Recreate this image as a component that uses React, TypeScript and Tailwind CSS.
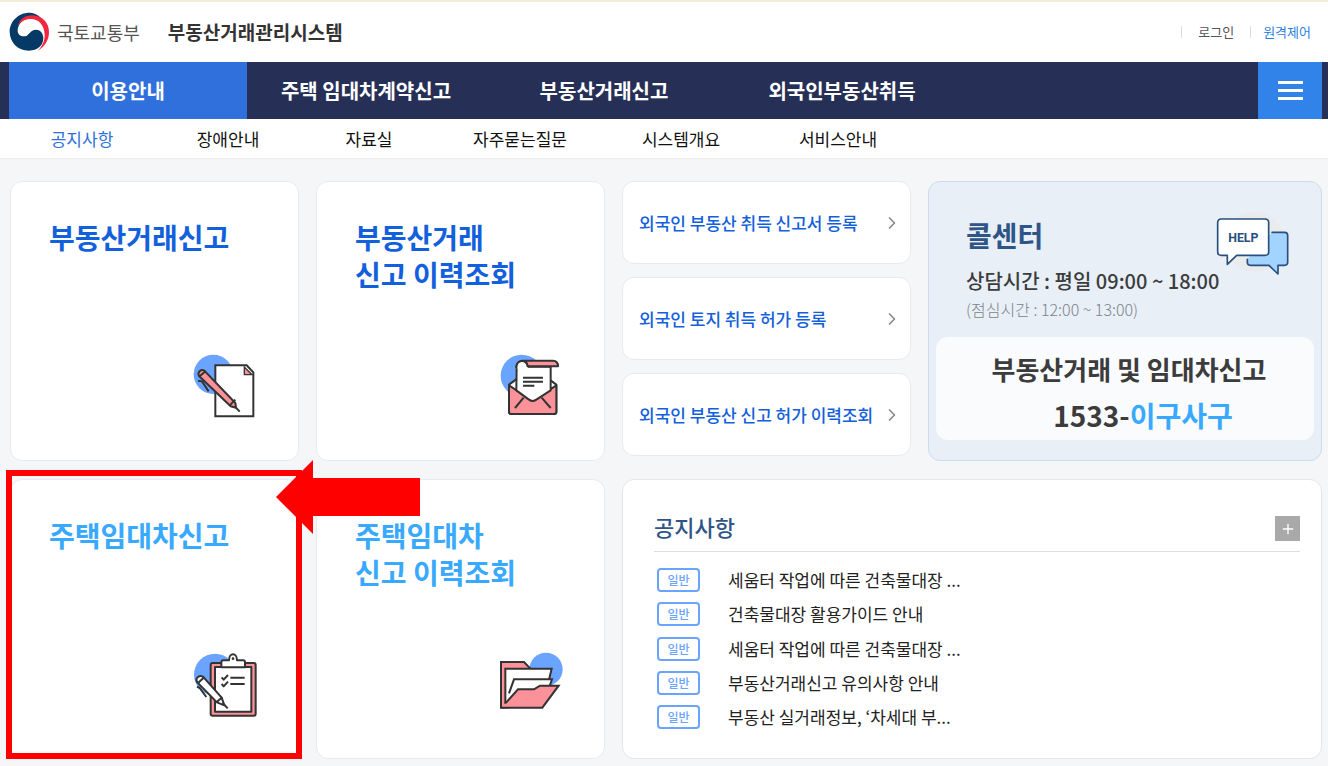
import { ReactNode } from 'react';
import { ChevronRight, Plus } from 'lucide-react';

const MENUS = ['이용안내', '주택 임대차계약신고', '부동산거래신고', '외국인부동산취득'];

const SUB_MENUS = ['공지사항', '장애안내', '자료실', '자주묻는질문', '시스템개요', '서비스안내'];

const NOTICES = [
  '세움터 작업에 따른 건축물대장 ...',
  '건축물대장 활용가이드 안내',
  '세움터 작업에 따른 건축물대장 ...',
  '부동산거래신고 유의사항 안내',
  '부동산 실거래정보, ‘차세대 부...',
];

function Logo() {
  return (
    <svg viewBox="14 12 120 120" className="w-10 h-10" aria-hidden="true">
      <path d="M76 14C42 14 16 40 16 71s24 57 58 57c26 0 43-16 43-37 0-17-10-26-22-26-18 0-20 20-37 20-11 0-18-8-18-17 0-20 18-38 42-38 16 0 32 8 42 20C114 30 97 14 76 14z" fill="#063a66" />
      <path d="M40 54C46 34 62 22 84 22c30 1 50 23 50 50 0 24-12 44-34 56 14-13 21-29 21-46 0-29-17-49-41-49-17 0-32 8-40 21z" fill="#f5273f" />
    </svg>
  );
}

function ReportIcon() {
  return (
    <svg viewBox="36 39 198 198" className="w-[66px] h-[66px]" fill="none" stroke="#333" strokeWidth="6" aria-hidden="true">
      <circle cx="100" cy="103" r="59" fill="#6ba4ff" stroke="none" />
      <path d="M106 76h94l20 21v132H106z" fill="#fff" />
      <path d="M193 81v23h23z" fill="#fb9199" strokeWidth="4" />
      <path d="M57 108c-6-11 6-22 16-16l93 97 2 14-16-4z" fill="#fb9199" strokeLinejoin="round" />
      <path d="M149 196l17-17M60 108l17-15M165 200l14 15" />
      <path d="M54 122l12 2 20 30" />
    </svg>
  );
}

function MailIcon() {
  return (
    <svg viewBox="24 39 198 198" className="w-[66px] h-[66px]" fill="none" stroke="#333" strokeWidth="6" strokeLinejoin="round" aria-hidden="true">
      <circle cx="95" cy="107" r="63" fill="#6ba4ff" stroke="none" />
      <path d="M57 134l71-52 71 52v82q0 6-7 6H64q-7 0-7-6z" fill="#fff" />
      <path d="M57 136l71 47 71-47v80q0 6-7 6H64q-7 0-7-6z" fill="#fb9199" />
      <path d="M80 80l-1 71 38 28q11 8 22 0l43-28V80z" fill="#fff" />
      <path d="M79 82c0-25 34-27 34-3h91c0-12-6-17-15-17H94" fill="#fb9199" />
      <path d="M79 84c0-27 33-27 34-5v6H82z" fill="#fff" stroke="none" />
      <path d="M79 84c0-27 33-27 34-3M99 113h60M99 125h60M99 137h34M101 173l-26 31M155 173l27 31" />
    </svg>
  );
}

function ChecklistIcon() {
  return (
    <svg viewBox="36 33 198 198" className="w-[66px] h-[66px]" fill="none" stroke="#333" strokeWidth="6" strokeLinejoin="round" aria-hidden="true">
      <circle cx="105" cy="104" r="63" fill="#6ba4ff" stroke="none" />
      <rect x="92" y="69" width="135" height="158" rx="6" fill="#fb9199" />
      <path d="M105 81h109v134H105z" fill="#fff" />
      <path d="M124 82V67q0-6 6-6h17c0-24 24-24 24 0h18q6 0 6 6v15z" fill="#fff" />
      <circle cx="159" cy="56" r="4" fill="#333" stroke="none" />
      <path d="M125 112l6 7 13-14M125 132l6 7 13-14M151 113h43M151 132h43" />
      <path d="M52 127c-9-12 8-25 19-15l54 61 8 23-22-9z" fill="#fff" />
      <path d="M55 128l16-15M109 187l18-15M128 189l15 16M51 140l8 4 20 27" />
    </svg>
  );
}

function FolderIcon() {
  return (
    <svg viewBox="24 33 198 198" className="w-[66px] h-[66px]" fill="none" stroke="#333" strokeWidth="6" aria-hidden="true">
      <circle cx="168" cy="88" r="50" fill="#6ba4ff" stroke="none" />
      <path d="M33 203V66h69l19 20v112z" fill="#fb9199" />
      <path d="M46 190V86h139l-17 70-60 30z" fill="#fff" />
      <path d="M108 118h78l-10 30-70 25-50 20z" fill="#fff" stroke="none" />
      <path d="M57 160l15-42h114l-7 20" />
      <path d="M46 190l38-42h48l18-11h56l-49 66H33" fill="#fb9199" />
    </svg>
  );
}

function HelpIcon() {
  return (
    <svg viewBox="888 123 222 195" className="w-[74px] h-[65px]" fill="none" stroke="#284f80" strokeWidth="5" strokeLinejoin="round" strokeLinecap="round" aria-hidden="true">
      <circle cx="1003" cy="215" r="90" fill="#eaebed" stroke="none" />
      <path d="M1056 187h38q9 0 9 9v81q0 9-9 9h-20v26l-27-26h-56q-9 0-9-9v-9" fill="#a3d4ff" />
      <path d="M904 147h131q11 0 11 11v87q0 11-11 11h-85l-28 27v-27h-18q-11 0-11-11v-87q0-11 11-11z" fill="#fff" />
      <text x="970" y="217" textAnchor="middle" fontSize="37" fontWeight="700" fill="#284f80" stroke="none" className="font-['Roboto',sans-serif]">
        HELP
      </text>
    </svg>
  );
}

function MenuCard({ lines, icon, color }: { lines: string[]; icon: ReactNode; color: string }) {
  return (
    <a href="#" className="flex flex-col justify-between h-[280px] bg-white border border-[#e9eaec] rounded-xl pt-[37px] pl-[38px] pr-10 pb-[41px]">
      <h2 className={`text-[28px] leading-[37px] font-bold ${color}`}>
        {lines.map((line) => (
          <span key={line} className="block whitespace-nowrap">{line}</span>
        ))}
      </h2>
      <div className="self-end">{icon}</div>
    </a>
  );
}

function LinkCard({ label }: { label: string }) {
  return (
    <a href="#" className="flex items-center justify-between h-[83px] bg-white border border-[#e9eaec] rounded-xl pl-4 pr-2 text-[17px] font-medium text-[#1260dc] whitespace-nowrap">
      {label}
      <ChevronRight className="w-5 h-5 shrink-0 text-[#888]" />
    </a>
  );
}

function CallCenter() {
  return (
    <section className="h-[280px] bg-[#e8eff7] border border-[#cbdcee] rounded-xl px-[7px] pt-[29px]">
      <div className="flex justify-between pl-[30px] pr-6">
        <h2 className="pt-1 text-[28px] leading-10 font-bold text-[#2f5587]">콜센터</h2>
        <HelpIcon />
      </div>
      <div className="pl-[30px] -mt-[9px] whitespace-nowrap">
        <p className="text-xl leading-7 font-medium text-[#3c3c3c]">상담시간 : 평일 09:00 ~ 18:00</p>
        <p className="mt-0.5 text-base leading-6 font-light text-[#7c838b]">(점심시간 : 12:00 ~ 13:00)</p>
      </div>
      <div className="mt-4 h-[103px] bg-[#fafbfd] rounded-xl pt-3 text-center font-bold text-[#3c3c3c] whitespace-nowrap">
        <p className="pl-2 text-[26px] leading-10">부동산거래 및 임대차신고</p>
        <p className="mt-1 pl-9 text-[28px] leading-[44px]">
          1533-<span className="text-[#38a9ff]">이구사구</span>
        </p>
      </div>
    </section>
  );
}

function NoticeBoard() {
  return (
    <section className="col-span-2 flex flex-col h-[280px] bg-white border border-[#e4e6e8] rounded-xl pt-7 pb-[29px] pl-[31px] pr-[21px]">
      <div className="flex items-start justify-between h-11 border-b border-[#dcdfe1]">
        <h2 className="text-[22px] leading-9 font-medium text-[#2f5587]">공지사항</h2>
        <button type="button" aria-label="공지사항 더보기" className="flex items-center justify-center w-[25px] h-[25px] mt-2 bg-[#a9a9a9] text-white">
          <Plus className="w-4 h-4" />
        </button>
      </div>
      <ul className="flex flex-col flex-1 justify-between pt-4 pl-[3px]">
        {NOTICES.map((notice, i) => (
          <li key={i} className="flex items-center gap-7 h-6">
            <span className="flex items-center justify-center w-[43px] h-6 border-2 border-[#6ba4ff] rounded text-xs font-medium text-[#6ba4ff]">일반</span>
            <a href="#" className="text-[17px] leading-6 text-[#222] whitespace-nowrap">{notice}</a>
          </li>
        ))}
      </ul>
    </section>
  );
}

export default function App() {
  return (
    <div className="min-h-screen bg-[#f5f6f8] font-['Noto_Sans_CJK_KR',sans-serif]">
      <header className="bg-white border-b border-[#ebecee]">
        <div className="flex items-center justify-between h-[62px] pl-[9px] pr-[17px] border-t-2 border-[#f5ecdb]">
          <div className="flex items-center">
            <Logo />
            <span className="ml-2 text-lg text-[#555]">국토교통부</span>
            <h1 className="ml-7 text-[19px] font-bold text-[#333]">부동산거래관리시스템</h1>
          </div>
          <div className="flex items-center text-[13px]">
            <a href="#" className="flex items-center text-[#555] before:w-px before:h-3 before:mr-4 before:bg-[#ddd]">로그인</a>
            <a href="#" className="flex items-center ml-4 text-[#2a7fdc] before:w-px before:h-3 before:mr-3 before:bg-[#ddd]">원격제어</a>
          </div>
        </div>

        <nav className="flex justify-between h-[57px] bg-[#262f56] pl-[9px] pr-[6px]">
          <ul className="flex">
            {MENUS.map((menu, i) => (
              <li key={menu} className={i === 0 ? 'bg-[#2f70dc]' : ''}>
                <a href="#" className="flex items-center justify-center w-[238px] h-full text-xl font-bold text-white">{menu}</a>
              </li>
            ))}
          </ul>
          <button type="button" aria-label="전체메뉴" className="flex flex-col items-center justify-center gap-[5px] w-16 bg-[#3183ea]">
            <span className="w-[25px] h-[3px] bg-white" />
            <span className="w-[25px] h-[3px] bg-white" />
            <span className="w-[25px] h-[3px] bg-white" />
          </button>
        </nav>

        <ul className="grid grid-cols-[144px_148px_134px_168px_154px_160px] h-[39px] pl-[10px]">
          {SUB_MENUS.map((menu, i) => (
            <li key={menu} className="flex items-center justify-center">
              <a href="#" className={`text-[17px] ${i === 0 ? 'text-[#2f70dc]' : 'text-[#111]'}`}>{menu}</a>
            </li>
          ))}
        </ul>
      </header>

      <main className="grid grid-cols-[289fr_289fr_289fr_394fr] gap-x-[17px] gap-y-[18px] pt-[22px] pb-2 pl-[10px] pr-[6px]">
        <MenuCard lines={['부동산거래신고']} icon={<ReportIcon />} color="text-[#1260dc]" />
        <MenuCard lines={['부동산거래', '신고 이력조회']} icon={<MailIcon />} color="text-[#1260dc]" />
        <div className="flex flex-col gap-[13px]">
          <LinkCard label="외국인 부동산 취득 신고서 등록" />
          <LinkCard label="외국인 토지 취득 허가 등록" />
          <LinkCard label="외국인 부동산 신고 허가 이력조회" />
        </div>
        <CallCenter />

        <div className="relative">
          <MenuCard lines={['주택임대차신고']} icon={<ChecklistIcon />} color="text-[#38a9ff]" />
          {/* highlight frame and arrow */}
          <div className="absolute -left-1 -top-[9px] -right-[3px] bottom-0 border-6 border-[#ff0000] pointer-events-none" />
          <svg viewBox="0 0 144 74" className="absolute -top-[19px] left-[266px] z-10 w-36 h-[74px] pointer-events-none" aria-hidden="true">
            <path d="M0 37L37 0v18h107v38H37v18z" fill="#ff0000" />
          </svg>
        </div>
        <MenuCard lines={['주택임대차', '신고 이력조회']} icon={<FolderIcon />} color="text-[#38a9ff]" />
        <NoticeBoard />
      </main>
    </div>
  );
}
